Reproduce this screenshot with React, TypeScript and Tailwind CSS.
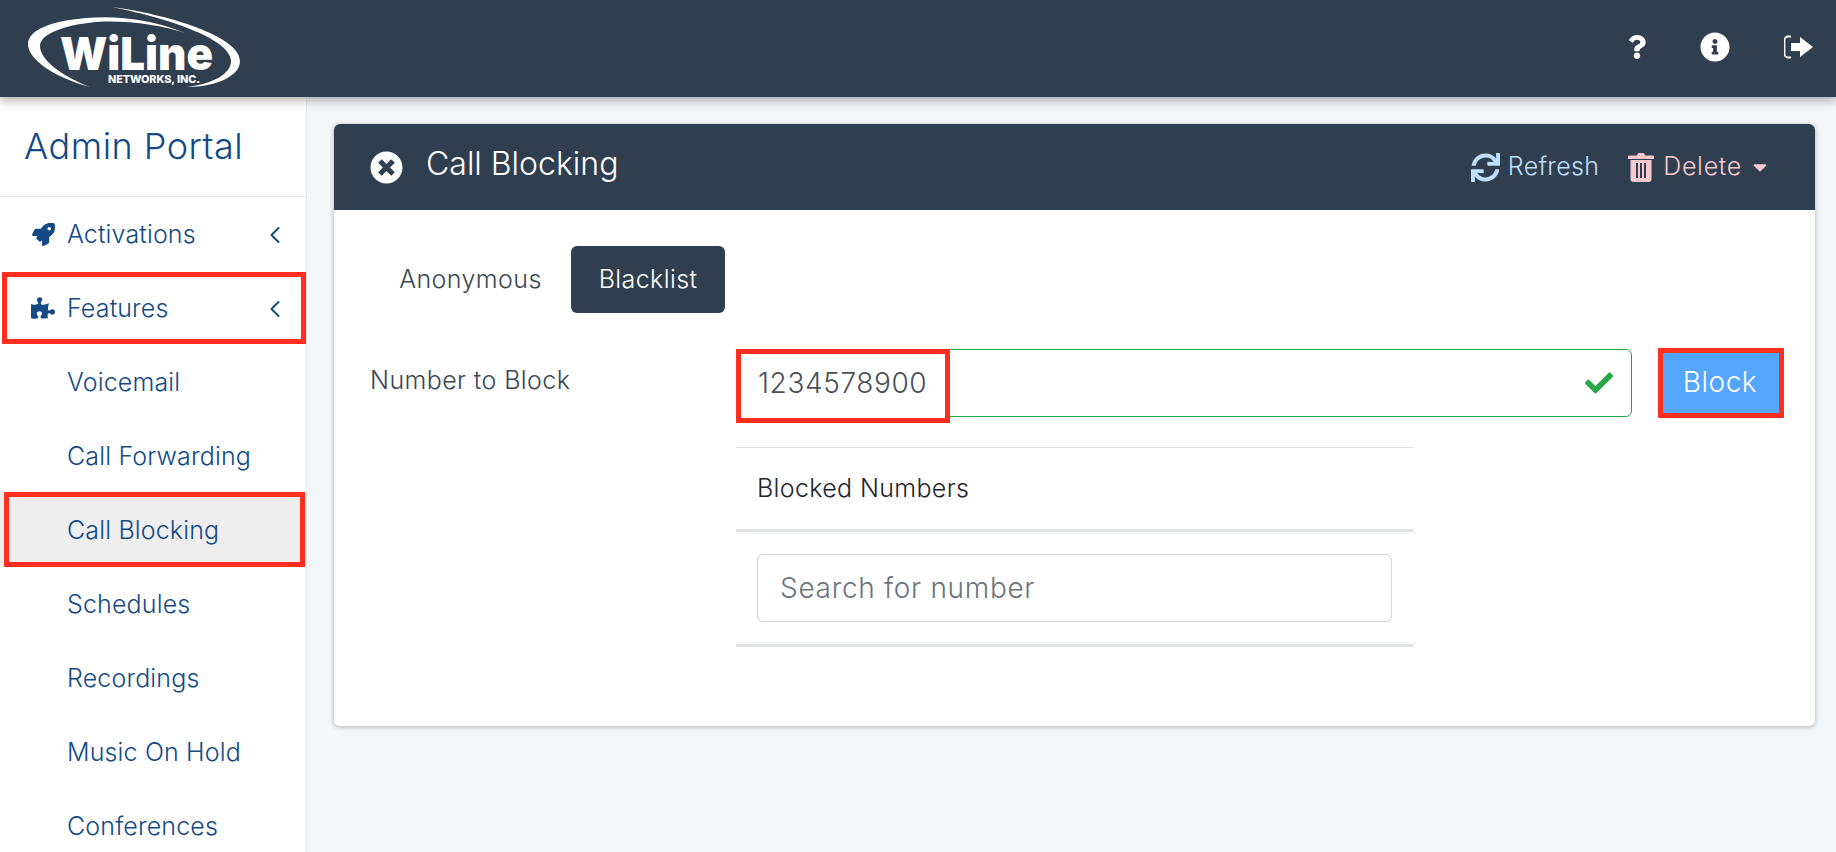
import { ChevronLeft } from 'lucide-react';
import { FaCheck, FaInfoCircle, FaPuzzlePiece, FaQuestion, FaRocket, FaSync, FaTimesCircle, FaCaretDown } from 'react-icons/fa';

import type { ReactNode } from 'react';

const font = "font-['Inter','Liberation_Sans',sans-serif]";

function Logo() {
  return (
    <svg width="216" height="84" viewBox="0 0 216 84" className="ml-[26px] mt-[6px]">
      <path d="M159 27C130 14 90 9 60 12C25 15 2 24 2 38C2 54 30 72 64 81C36 70 14 54 14 40C14 28 38 19 70 16C100 14 135 19 159 27Z" fill="#fff" />
      <path d="M86 1C140 8 214 30 214 55C214 70 190 81 161 81C186 78 206 68 205 54C203 34 150 14 86 1Z" fill="#fff" />
      <text x="34" y="64" fontFamily="Inter, sans-serif" fontWeight="900" fontSize="45" textLength="153" lengthAdjust="spacingAndGlyphs" fill="#fff">WiLine</text>
      <text x="82" y="77" fontFamily="Inter, sans-serif" fontWeight="800" fontSize="10.8" textLength="92" fill="#fff">NETWORKS, INC.</text>
    </svg>
  );
}

function SignOutIcon() {
  return (
    <svg width="29" height="24" viewBox="0 0 29 24" fill="#fff">
      <path d="M7 1.5H4A3.5 3.5 0 0 0 .5 5v14A3.5 3.5 0 0 0 4 22.5h3" fill="none" stroke="#fff" strokeWidth="1.8" />
      <path d="M7 8h9V2l13 10-13 10v-6H7z" />
    </svg>
  );
}

function TrashIcon() {
  return (
    <svg width="26" height="30" viewBox="0 0 26 30" fill="#f6c9d0">
      <path d="M9 3.5 10 1h6l1 2.5h8a1 1 0 0 1 1 1V7H0V4.500a1 1 0 0 1 1-1z" />
      <path fillRule="evenodd" d="M2.500 8h21v19a3 3 0 0 1-3 3h-15a3 3 0 0 1-3-3zM8 11v15h2V11zm4 0v15h2V11zm4 0v15h2V11z" />
    </svg>
  );
}

function NavRow({ label, icon, chevron, selected, children }: { label: string; icon?: ReactNode; chevron?: boolean; selected?: boolean; children?: ReactNode }) {
  return (
    <div className={`relative flex h-[74px] shrink-0 items-center text-[25px] font-light tracking-[0.15px] text-[#134a86] ${selected ? 'bg-[#eeeeee]' : ''}`}>
      {children}
      <div className="relative flex w-[67px] shrink-0 justify-end pr-[12px]">{icon}</div>
      <span className="relative pt-[2px]">{label}</span>
      {chevron && <ChevronLeft size={28} strokeWidth={1.7} className="absolute left-[261px] top-[24px]" />}
    </div>
  );
}

function Sidebar() {
  return (
    <aside className="flex w-[307px] shrink-0 flex-col overflow-hidden border-r border-[#e9ecef] bg-white">
      <div className="flex h-[100px] shrink-0 items-center border-b border-[#e6e8eb] pb-[2px] pl-[24px] text-[36px] font-light tracking-[0.5px] text-[#134a86]">
        Admin Portal
      </div>
      <NavRow label="Activations" chevron icon={<FaRocket className="text-[23px]" />} />
      <NavRow label="Features" chevron icon={<FaPuzzlePiece className="text-[24px]" />}>
        <div className="absolute left-[2px] right-0 top-[1px] bottom-[1px] border-[5px] border-[#ff2e1f]" />
      </NavRow>
      <NavRow label="Voicemail" />
      <NavRow label="Call Forwarding" />
      <NavRow label="Call Blocking" selected>
        <div className="absolute left-[4px] right-[1px] top-[-1px] bottom-0 border-[5px] border-[#ff2e1f]" />
      </NavRow>
      <NavRow label="Schedules" />
      <NavRow label="Recordings" />
      <NavRow label="Music On Hold" />
      <NavRow label="Conferences" />
    </aside>
  );
}

function CardHeader() {
  return (
    <div className="flex h-[86px] items-center rounded-t-[6px] bg-[#2f3f50] pl-[36px] pr-[44px]">
      <FaTimesCircle className="text-[33px] text-white" />
      <span className="mb-[6px] ml-[23px] text-[32px] font-light text-white">Call Blocking</span>
      <div className="ml-auto flex items-center text-[#bfdffb]">
        <FaSync className="text-[29px]" />
        <span className="ml-[8px] text-[25px] font-light tracking-[0.3px]">Refresh</span>
      </div>
      <div className="ml-[29px] flex items-center text-[#f6c9d0]">
        <TrashIcon />
        <span className="ml-[9px] text-[25px] font-light tracking-[0.7px]">Delete</span>
        <FaCaretDown className="ml-[7px] text-[22px]" />
      </div>
    </div>
  );
}

function CardBody() {
  return (
    <div className="flex h-[516px] flex-col pl-[36px] pr-[31px] pt-[36px]">
      <div className="flex items-center">
        <div className="flex h-[67px] w-[201px] items-center justify-center text-[25px] font-light tracking-[0.4px] text-[#3a4654]">Anonymous</div>
        <div className="flex h-[67px] w-[154px] items-center justify-center rounded-[6px] bg-[#2f3f50] text-[25px] font-light tracking-[0.4px] text-white">Blacklist</div>
      </div>
      <div className="mt-[36px] flex">
        <label className="w-[366px] shrink-0 pt-[13px] text-[25px] font-light tracking-[0.4px] text-[#3a4654]">Number to Block</label>
        <div className="w-[896px] shrink-0">
          <div className="relative flex h-[68px] items-center rounded-[6px] border border-[#28a745] pl-[21px] text-[28px] font-light tracking-[0.6px] text-[#495057]">
            <div className="absolute -left-px -top-px h-[74px] w-[214px] border-[5px] border-[#ff2e1f] bg-white" />
            <span className="relative">1234578900</span>
            <FaCheck className="absolute right-[18px] top-[19px] text-[28px] text-[#28a745]" />
          </div>
          <div className="mt-[30px] w-[677px] border-t border-[#dee2e6]">
            <div className="flex h-[84px] items-center border-b-[3px] border-[#dee2e6] pl-[21px] text-[25px] font-light tracking-[0.35px] text-[#212529]">Blocked Numbers</div>
            <div className="border-b-[3px] border-[#dee2e6] px-[21px] py-[22px]">
              <input
                placeholder="Search for number"
                className="block h-[68px] w-full rounded-[6px] border border-[#ced4da] px-[22px] text-[28px] font-light tracking-[0.7px] placeholder:text-[#6c757d]"
              />
            </div>
          </div>
        </div>
        <button className="ml-[26px] h-[70px] w-[126px] -translate-y-px border-[5px] border-[#ff2e1f] bg-[#55a6ff] pb-[2px] pr-[2px] text-[28px] font-light tracking-[0.5px] text-white">Block</button>
      </div>
    </div>
  );
}

export default function App() {
  return (
    <div className={`${font} flex h-[852px] w-[1836px] flex-col overflow-hidden bg-[#f4f7fa]`}>
      <header className="relative z-10 flex h-[97px] shrink-0 bg-[#2f3f50] shadow-[0_3px_10px_rgba(0,0,0,0.35)]">
        <Logo />
        <div className="ml-auto flex items-center pb-[3px] pr-[23px] text-white">
          <FaQuestion className="mr-[51px] text-[24px]" />
          <FaInfoCircle className="mr-[54px] text-[30px]" />
          <SignOutIcon />
        </div>
      </header>
      <div className="flex min-h-0 flex-1">
        <Sidebar />
        <main className="flex-1 pl-[27px] pr-[21px] pt-[27px]">
          <div className="rounded-[6px] bg-white shadow-[0_1px_5px_rgba(0,0,0,0.3)]">
            <CardHeader />
            <CardBody />
          </div>
        </main>
      </div>
    </div>
  );
}
